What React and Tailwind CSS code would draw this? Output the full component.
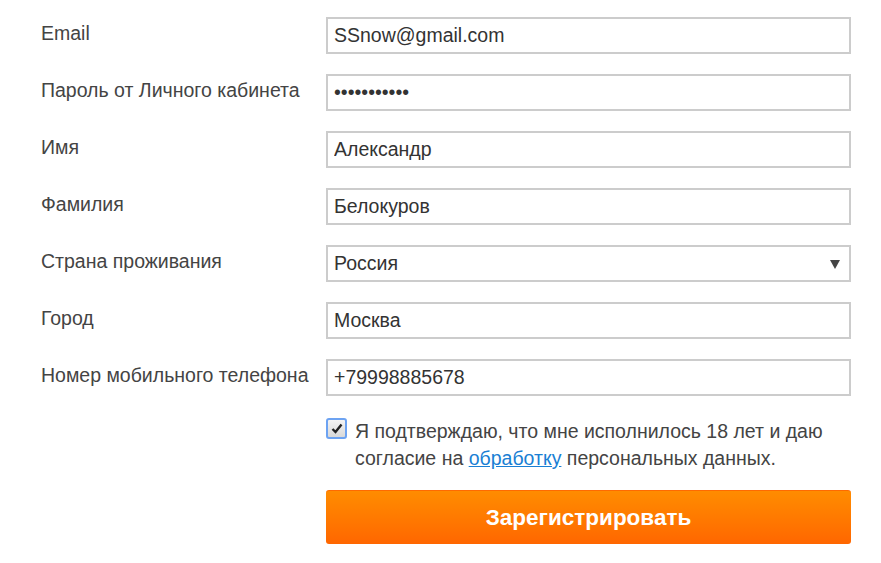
import React, { useState } from 'react';

const FIELDS = [
  { key: 'email', label: 'Email', value: 'SSnow@gmail.com', type: 'text' },
  { key: 'password', label: 'Пароль от Личного кабинета', value: 'qwerty12345', type: 'password' },
  { key: 'name', label: 'Имя', value: 'Александр', type: 'text' },
  { key: 'surname', label: 'Фамилия', value: 'Белокуров', type: 'text' },
  { key: 'country', label: 'Страна проживания', value: 'Россия', type: 'select' },
  { key: 'city', label: 'Город', value: 'Москва', type: 'text' },
  { key: 'phone', label: 'Номер мобильного телефона', value: '+79998885678', type: 'text' },
];

const inputCls =
  'w-full h-[37px] border-2 border-[#cccccc] bg-white px-[6px] text-[19.5px] text-[#333333] outline-none';

export default function App() {
  const [values, setValues] = useState(
    Object.fromEntries(FIELDS.map((f) => [f.key, f.value]))
  );
  const [agree, setAgree] = useState(true);

  const update = (key) => (e) => setValues({ ...values, [key]: e.target.value });

  return (
    <div
      className="min-h-[563px] w-[881px] bg-white pl-[41px] pt-[17px] text-[#444444]"
      style={{ fontFamily: '"Liberation Sans", Arial, sans-serif' }}
    >
      <form className="flex flex-col gap-[20px]" onSubmit={(e) => e.preventDefault()}>
        {FIELDS.map((f) => (
          <div key={f.key} className="flex items-start">
            <label className="w-[285px] shrink-0 pt-[5px] text-[19.5px] leading-[22px] text-[#444444]">
              {f.label}
            </label>
            <div className="w-[525px]">
              {f.type === 'select' ? (
                <div className="relative">
                  <select
                    value={values[f.key]}
                    onChange={update(f.key)}
                    className={`${inputCls} appearance-none`}
                  >
                    <option>Россия</option>
                    <option>Украина</option>
                    <option>Беларусь</option>
                    <option>Казахстан</option>
                  </select>
                  {/* arrow */}
                  <svg
                    className="pointer-events-none absolute right-[11px] top-[15px]"
                    width="10"
                    height="9"
                    viewBox="0 0 10 9"
                  >
                    <path d="M0 0 H10 L5 9 Z" fill="#444444" />
                  </svg>
                </div>
              ) : (
                <input
                  type={f.type}
                  value={values[f.key]}
                  onChange={update(f.key)}
                  className={inputCls}
                />
              )}
            </div>
          </div>
        ))}

        {/* agreement */}
        <div className="flex items-start pl-[285px] pt-[2px]">
          <button
            type="button"
            onClick={() => setAgree(!agree)}
            className="flex h-[21px] w-[21px] shrink-0 items-center justify-center rounded-[3px] border-2 border-[#6da3f2] bg-gradient-to-b from-[#f4f4f4] to-[#d9d9d9]"
          >
            {agree && (
              <svg width="12" height="11" viewBox="0 0 12 11">
                <path d="M1.5 6 L4.5 9 L10.5 1.5" stroke="#222222" strokeWidth="2.4" fill="none" />
              </svg>
            )}
          </button>
          <p className="ml-[8px] w-[490px] text-[19.5px] leading-[27px] text-[#444444]">
            Я подтверждаю, что мне исполнилось 18 лет и даю согласие на{' '}
            <a href="#" className="text-[#1a7fd4] underline">
              обработку
            </a>{' '}
            персональных данных.
          </p>
        </div>

        <div className="-mt-[2px] pl-[285px]">
          <button
            type="submit"
            className="h-[54px] w-[525px] rounded-[3px] border-t border-[#ff6a00] bg-gradient-to-b from-[#ff8c00] to-[#ff6600] text-[22.5px] font-bold text-white"
          >
            Зарегистрировать
          </button>
        </div>
      </form>
    </div>
  );
}
